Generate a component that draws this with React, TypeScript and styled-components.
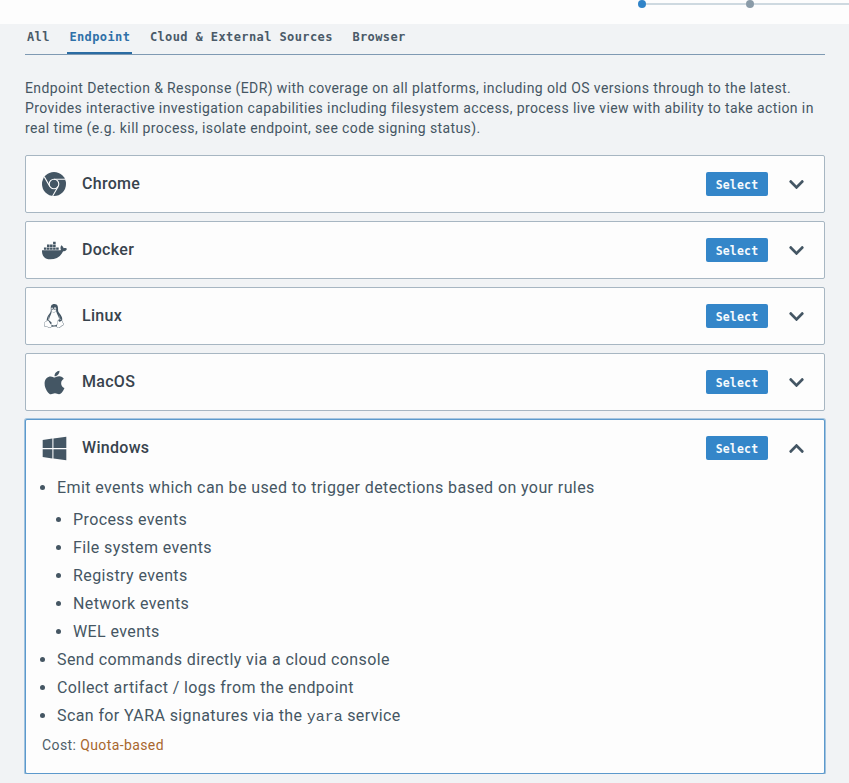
import React from "react";
import styled, { createGlobalStyle } from "styled-components";
import { FaDocker, FaLinux, FaApple, FaWindows, FaChevronDown, FaChevronUp } from "react-icons/fa";

const Global = createGlobalStyle`
  html, body { margin: 0; padding: 0; background: #f1f3f5; }
  body { font-family: Roboto, "Noto Sans", sans-serif; color: #394b59; overflow: hidden; }
`;

const TopBar = styled.div`
  height: 24px;
  background: #fdfdfd;
  display: flex;
  justify-content: flex-end;
  overflow: hidden;
`;
const Stepper = styled.div`
  width: 211px;
  height: 8px;
  display: flex;
  align-items: center;
`;
const Dot = styled.span<{ $active?: boolean }>`
  flex: none;
  width: 8px;
  height: 8px;
  border-radius: 50%;
  background: ${(p) => (p.$active ? "#3184c8" : "#8a9ba8")};
`;
const StepLine = styled.span<{ $grow?: boolean }>`
  height: 2px;
  background: #ced9e0;
  flex: ${(p) => (p.$grow ? "1" : "0 0 100px")};
`;

const Content = styled.div`
  padding: 0 24px 0 25px;
`;
const Tabs = styled.div`
  height: 30px;
  display: flex;
  gap: 15.5px;
  border-bottom: 1px solid #7f9ab3;
  box-sizing: content-box;
`;
const Tab = styled.div<{ $active?: boolean }>`
  height: 30px;
  box-sizing: border-box;
  padding: 6px 2px 0;
  font: 700 12px/14px "DejaVu Sans Mono", "Liberation Mono", monospace;
  letter-spacing: 0.4px;
  color: ${(p) => (p.$active ? "#2f70a8" : "#4a5a68")};
  border-bottom: 2px solid ${(p) => (p.$active ? "#2b6ca3" : "transparent")};
`;
const Description = styled.p`
  margin: 23px 0 17px;
  font-size: 14px;
  line-height: 20px;
  letter-spacing: 0.39px;
  color: #455663;
  white-space: nowrap;
`;
const Cards = styled.div`
  display: flex;
  flex-direction: column;
  gap: 8px;
`;
const Card = styled.div<{ $open?: boolean }>`
  background: #fdfdfd;
  border: 1px solid ${(p) => (p.$open ? "#5c99cc" : "#a7b6c2")};
  box-shadow: ${(p) => (p.$open ? "0 0 0 1px #5c99cc80, 0 1px 1px #3f7fb5a0" : "none")};
  border-radius: 2px;
  box-sizing: border-box;
`;
const CardHeader = styled.div`
  height: 56px;
  display: flex;
  align-items: center;
  padding: 0 16px;
  gap: 16px;
`;
const IconBox = styled.span`
  flex: none;
  width: 24px;
  height: 24px;
  display: flex;
  align-items: center;
  justify-content: center;
  color: #445664;
  svg { display: block; flex: none; }
`;
const CardTitle = styled.div`
  flex: 1;
  font-size: 16px;
  line-height: 18px;
  font-weight: 500;
  letter-spacing: 0.3px;
  color: #38434d;
`;
const SelectButton = styled.button`
  width: 62px;
  height: 24px;
  padding: 2px 0 0;
  border: 0;
  border-radius: 2px;
  background: #3486c9;
  color: #f6fafd;
  font: 700 11.5px/22px "DejaVu Sans Mono", "Liberation Mono", monospace;
  letter-spacing: 0.2px;
`;
const Chevron = styled.span`
  width: 16px;
  height: 16px;
  margin: 0 4px;
  display: flex;
  align-items: center;
  justify-content: center;
  color: #445664;
  svg { flex: none; }
`;
const CardBody = styled.div`
  padding: 0 16px 18px;
  margin-top: -2px;
`;
const List = styled.ul`
  margin: 0;
  padding: 0 0 0 15px;
  list-style: disc;
  font-size: 16px;
  line-height: 28px;
  letter-spacing: 0.4px;
  color: #455663;
`;
const Mono = styled.code`
  font: 400 15px "Liberation Mono", monospace;
  letter-spacing: 0;
`;
const SubList = styled(List)`
  margin-top: 4px;
  padding-left: 16px;
`;
const Cost = styled.div`
  margin-top: 5px;
  font-size: 14px;
  line-height: 20px;
  letter-spacing: 0.4px;
  color: #4e5d69;
`;
const CostLink = styled.span`
  color: #a8672e;
`;

const ChromeIcon = () => (
  <svg width="24" height="24" viewBox="0 0 24 24">
    <circle cx="12" cy="12" r="12" fill="currentColor" />
    <g fill="none" stroke="#fdfdfd" strokeWidth="1.1">
      <circle cx="12" cy="12" r="4.8" />
      <path d="M12 7.2H23M16.16 14.4L10.66 23.93M7.84 14.4L2.34 4.87" />
    </g>
  </svg>
);

const platforms = [
  { name: "Chrome", icon: <ChromeIcon /> },
  { name: "Docker", icon: <FaDocker size={25} /> },
  { name: "Linux", icon: <FaLinux size={24} /> },
  { name: "MacOS", icon: <FaApple size={27} /> },
];

export default function App() {
  return (
    <>
      <Global />
      <TopBar>
        <Stepper>
          <Dot $active />
          <StepLine />
          <Dot />
          <StepLine $grow />
        </Stepper>
      </TopBar>
      <Content>
        <Tabs>
          <Tab>All</Tab>
          <Tab $active>Endpoint</Tab>
          <Tab>Cloud &amp; External Sources</Tab>
          <Tab>Browser</Tab>
        </Tabs>
        <Description>
          Endpoint Detection &amp; Response (EDR) with coverage on all platforms, including old OS versions through to the latest.
          <br />
          Provides interactive investigation capabilities including filesystem access, process live view with ability to take action in
          <br />
          real time (e.g. kill process, isolate endpoint, see code signing status).
        </Description>
        <Cards>
          {platforms.map((p) => (
            <Card key={p.name}>
              <CardHeader>
                <IconBox>{p.icon}</IconBox>
                <CardTitle>{p.name}</CardTitle>
                <SelectButton>Select</SelectButton>
                <Chevron><FaChevronDown size={17} /></Chevron>
              </CardHeader>
            </Card>
          ))}
          <Card $open>
            <CardHeader>
              <IconBox><FaWindows size={27} /></IconBox>
              <CardTitle>Windows</CardTitle>
              <SelectButton>Select</SelectButton>
              <Chevron><FaChevronUp size={17} /></Chevron>
            </CardHeader>
            <CardBody>
              <List>
                <li>
                  Emit events which can be used to trigger detections based on your rules
                  <SubList>
                    <li>Process events</li>
                    <li>File system events</li>
                    <li>Registry events</li>
                    <li>Network events</li>
                    <li>WEL events</li>
                  </SubList>
                </li>
                <li>Send commands directly via a cloud console</li>
                <li>Collect artifact / logs from the endpoint</li>
                <li>Scan for YARA signatures via the <Mono>yara</Mono> service</li>
              </List>
              <Cost>Cost: <CostLink>Quota-based</CostLink></Cost>
            </CardBody>
          </Card>
        </Cards>
      </Content>
    </>
  );
}
